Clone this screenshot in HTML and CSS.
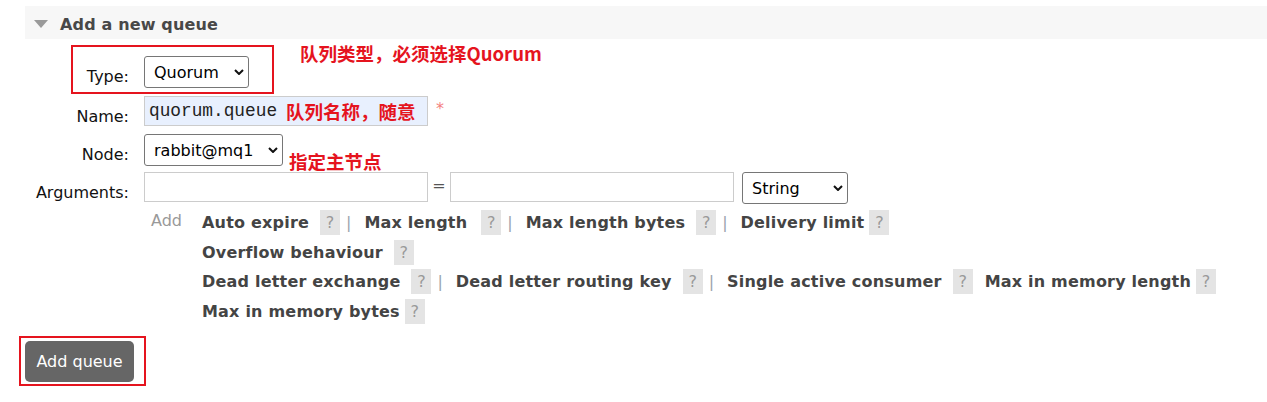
FILE: index.html
```html
<!DOCTYPE html>
<html lang="en">
<head>
<meta charset="utf-8">
<title>Add a new queue</title>
<link rel="stylesheet" href="styles.css">
</head>
<body>
<div class="page">
  <div class="section-head">
    <span class="tri"></span>
    <h2 class="title">Add a new queue</h2>
  </div>

  <div class="form">
    <label class="lbl">Type:</label>
    <div class="field">
      <span class="sel-wrap">
        <select class="sel sel-type"><option>Quorum</option><option>Classic</option><option>Stream</option></select>
        <svg class="chev" width="10" height="6" viewBox="0 0 10 6"><path d="M1 1 L5 5 L9 1" fill="none" stroke="#111" stroke-width="2"/></svg>
      </span>
    </div>

    <label class="lbl">Name:</label>
    <div class="field">
      <input class="txt txt-name" type="text" value="quorum.queue"><span class="req">*</span>
    </div>

    <label class="lbl">Node:</label>
    <div class="field">
      <span class="sel-wrap">
        <select class="sel sel-node"><option>rabbit@mq1</option></select>
        <svg class="chev" width="10" height="6" viewBox="0 0 10 6"><path d="M1 1 L5 5 L9 1" fill="none" stroke="#111" stroke-width="2"/></svg>
      </span>
    </div>

    <label class="lbl lbl-args">Arguments:</label>
    <div class="field field-args">
      <input class="txt txt-arg" type="text"><span class="eq">=</span><input class="txt txt-arg" type="text">
      <span class="sel-wrap sel-wrap-kind">
        <select class="sel sel-kind"><option>String</option><option>Number</option><option>Boolean</option><option>List</option></select>
        <svg class="chev" width="10" height="6" viewBox="0 0 10 6"><path d="M1 1 L5 5 L9 1" fill="none" stroke="#111" stroke-width="2"/></svg>
      </span>
    </div>

    <div class="lbl"></div>
    <div class="field field-add">
      <span class="add">Add</span>
      <div class="arg-links">
        <div class="line">
          <span class="arg">Auto expire</span><span class="help">?</span><span class="sep">|</span>
          <span class="arg">Max length</span><span class="help help-w">?</span><span class="sep">|</span>
          <span class="arg">Max length bytes</span><span class="help">?</span><span class="sep">|</span>
          <span class="arg">Delivery limit</span><span class="help tight">?</span>
        </div>
        <div class="line">
          <span class="arg">Overflow behaviour</span><span class="help">?</span>
        </div>
        <div class="line">
          <span class="arg">Dead letter exchange</span><span class="help">?</span><span class="sep">|</span>
          <span class="arg">Dead letter routing key</span><span class="help">?</span><span class="sep">|</span>
          <span class="arg">Single active consumer</span><span class="help gap">?</span>
          <span class="arg">Max in memory length</span><span class="help tight">?</span>
        </div>
        <div class="line">
          <span class="arg">Max in memory bytes</span><span class="help tight">?</span>
        </div>
      </div>
    </div>
  </div>

  <div class="actions">
    <button class="btn" type="button">Add queue</button>
  </div>

  <div class="note-box note-box-type"></div>
  <div class="note-box note-box-btn"></div>
  <span class="note note-type">队列类型，必须选择Quorum</span>
  <span class="note note-name">队列名称，随意</span>
  <span class="note note-node">指定主节点</span>
</div>
</body>
</html>
```

FILE: styles.css
```css
* { box-sizing: border-box; }

body {
  margin: 0;
  background: #fff;
  font-family: "DejaVu Sans", Verdana, sans-serif;
  font-size: 16px;
  color: #000;
}

.page {
  position: relative;
  padding: 6px 0 0 25px;
  height: 402px;
}

.section-head {
  display: flex;
  align-items: center;
  height: 33px;
  background: #f7f7f7;
  padding-left: 9px;
  padding-top: 3px;
}

.tri {
  width: 0;
  height: 0;
  border-left: 7px solid transparent;
  border-right: 7px solid transparent;
  border-top: 8px solid #9a9a9a;
  margin-right: 12px;
  margin-top: -1px;
}

.title {
  margin: 0;
  font-size: 16px;
  font-weight: bold;
  color: #484848;
  letter-spacing: 0.15px;
}

.form {
  display: grid;
  grid-template-columns: 104px 1fr;
  column-gap: 15px;
  row-gap: 8px;
  margin-top: 17px;
}

.lbl {
  text-align: right;
  padding-top: 11px;
  color: #111;
}

.field {
  display: flex;
  align-items: flex-start;
}

.sel-wrap {
  position: relative;
  display: inline-block;
}

.sel-wrap-kind { margin-left: 8px; }

.chev {
  position: absolute;
  right: 5px;
  top: 13px;
  pointer-events: none;
}

.sel {
  appearance: none;
  -webkit-appearance: none;
  display: block;
  font-family: "DejaVu Sans", Verdana, sans-serif;
  font-size: 16px;
  color: #000;
  height: 32px;
  padding: 0 20px 0 9px;
  border: 1px solid #767676;
  border-radius: 3px;
  background: #fff;
}

.sel-type { width: 105px; }
.sel-node { width: 139px; }
.sel-kind { width: 106px; }

.txt {
  height: 30px;
  width: 284px;
  border: 1px solid #cccccc;
  padding: 0 4px;
  font-family: "Liberation Mono", "Courier New", monospace;
  font-size: 17.8px;
  color: #222;
  background: #fff;
}

.txt-name { background: #e8f0fe; }

.req {
  color: #f47f7f;
  margin-left: 8px;
  margin-top: 3px;
  font-size: 16px;
}

.field-args { margin-top: -2px; }
.lbl-args { margin-top: -2px; }

.eq {
  color: #555;
  width: 22px;
  text-align: center;
  padding-top: 4px;
}

.field-add {
  margin-top: -4px;
}

.add {
  color: #999;
  margin-left: 7px;
  padding-top: 3px;
  width: 51px;
}

.arg-links {
  display: flex;
  flex-direction: column;
}

.line {
  display: flex;
  align-items: center;
  height: 29.5px;
  white-space: nowrap;
}

.arg {
  font-weight: bold;
  color: #444;
  letter-spacing: 0.2px;
}

.help {
  display: inline-block;
  width: 20px;
  height: 25px;
  line-height: 25px;
  text-align: center;
  background: #e4e4e4;
  color: #999;
  margin-left: 11px;
}

.help-w { margin-left: 14px; }
.help.tight { margin-left: 5px; }
.help.gap { margin-right: 12px; }

.sep {
  color: #9aa3ad;
  margin: 0 13px 0 6px;
}

.actions {
  margin-top: 15px;
}

.btn {
  font-family: "DejaVu Sans", Verdana, sans-serif;
  font-size: 16px;
  color: #fff;
  background: #666;
  border: none;
  border-radius: 5px;
  width: 109px;
  height: 41px;
  padding: 0;
}

.note-box {
  position: absolute;
  border: 2px solid #e5141e;
}

.note-box-type {
  left: 71px;
  top: 45px;
  width: 203px;
  height: 49px;
}

.note-box-btn {
  left: 19px;
  top: 336px;
  width: 127px;
  height: 50px;
}

.note {
  position: absolute;
  font-family: "Noto Sans CJK SC", sans-serif;
  font-weight: bold;
  font-size: 18.5px;
  line-height: 1;
  color: #e5141e;
  white-space: nowrap;
}

.note-type { left: 300px; top: 44px; }
.note-name { left: 286px; top: 102px; }
.note-node { left: 289px; top: 152px; }
```
